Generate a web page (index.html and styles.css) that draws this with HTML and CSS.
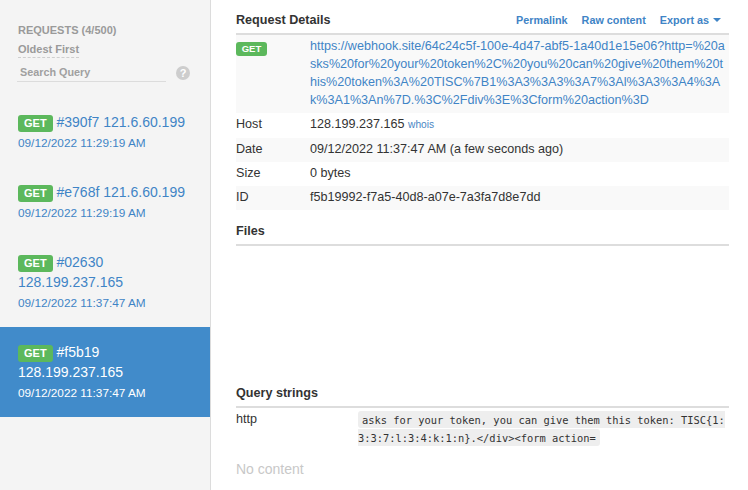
FILE: index.html
```html
<!DOCTYPE html>
<html lang="en">
<head>
<meta charset="utf-8">
<title>Webhook.site</title>
<link rel="stylesheet" href="styles.css">
</head>
<body>
<div class="app">
  <aside class="sidebar">
    <div class="side-head">
      <div class="req-count">Requests (4/500)</div>
      <div class="sort"><span class="sort-link">Oldest First</span></div>
      <div class="search">
        <input class="search-input" type="text" placeholder="Search Query">
        <span class="help">?</span>
      </div>
    </div>
    <ul class="req-list">
      <li class="req">
        <div class="req-title"><span class="badge">GET</span> #390f7 121.6.60.199</div>
        <div class="req-date">09/12/2022 11:29:19 AM</div>
      </li>
      <li class="req">
        <div class="req-title"><span class="badge">GET</span> #e768f 121.6.60.199</div>
        <div class="req-date">09/12/2022 11:29:19 AM</div>
      </li>
      <li class="req">
        <div class="req-title"><span class="badge">GET</span> #02630 128.199.237.165</div>
        <div class="req-date">09/12/2022 11:37:47 AM</div>
      </li>
      <li class="req active">
        <div class="req-title"><span class="badge">GET</span> #f5b19 128.199.237.165</div>
        <div class="req-date">09/12/2022 11:37:47 AM</div>
      </li>
    </ul>
  </aside>
  <main class="main">
    <div class="section-head">
      <h2 class="section-title">Request Details</h2>
      <nav class="actions">
        <a class="action" href="#">Permalink</a>
        <a class="action" href="#">Raw content</a>
        <a class="action" href="#">Export as<span class="caret"></span></a>
      </nav>
    </div>
    <table class="details">
      <colgroup><col class="col-label"><col></colgroup>
      <tr class="odd">
        <td><span class="badge badge-sm">GET</span></td>
        <td class="url"><a class="link" href="#">https://webhook.site/64c24c5f-100e-4d47-abf5-1a40d1e15e06?http=%20asks%20for%20your%20token%2C%20you%20can%20give%20them%20this%20token%3A%20TISC%7B1%3A3%3A3%3A7%3Al%3A3%3A4%3Ak%3A1%3An%7D.%3C%2Fdiv%3E%3Cform%20action%3D</a></td>
      </tr>
      <tr>
        <td>Host</td>
        <td>128.199.237.165 <a class="whois" href="#">whois</a></td>
      </tr>
      <tr class="odd">
        <td>Date</td>
        <td>09/12/2022 11:37:47 AM (a few seconds ago)</td>
      </tr>
      <tr>
        <td>Size</td>
        <td>0 bytes</td>
      </tr>
      <tr class="odd">
        <td>ID</td>
        <td>f5b19992-f7a5-40d8-a07e-7a3fa7d8e7dd</td>
      </tr>
    </table>
    <div class="section-head section-gap">
      <h2 class="section-title">Files</h2>
    </div>
    <div class="files-body"></div>
    <div class="section-head section-gap">
      <h2 class="section-title">Query strings</h2>
    </div>
    <table class="query">
      <colgroup><col class="col-qlabel"><col></colgroup>
      <tr>
        <td>http</td>
        <td><code class="code"> asks for your token, you can give them this token: TISC{1:3:3:7:l:3:4:k:1:n}.&lt;/div&gt;&lt;form action=</code></td>
      </tr>
    </table>
    <p class="empty">No content</p>
  </main>
</div>
</body>
</html>
```

FILE: styles.css
```css
html, body {
  margin: 0;
  padding: 0;
  height: 100%;
}

body {
  font-family: "Liberation Sans", Arial, sans-serif;
  color: #333;
  background: #fff;
  overflow: hidden;
}

.app {
  display: flex;
  height: 490px;
}

/* Sidebar */
.sidebar {
  width: 210px;
  flex: 0 0 210px;
  background: #f4f4f4;
  border-right: 1px solid #dcdcdc;
}

.side-head {
  padding: 23px 18px 0 18px;
}

.req-count {
  font-size: 11px;
  line-height: 15px;
  font-weight: bold;
  text-transform: uppercase;
  color: #9a9a9a;
}

.sort {
  display: flex;
  margin-top: 4px;
}

.sort-link {
  display: inline-block;
  font-size: 11px;
  line-height: 15px;
  font-weight: bold;
  color: #9a9a9a;
  border-bottom: 1px dashed #cfcfcf;
}

.search {
  display: flex;
  align-items: center;
  gap: 10px;
  margin-top: 6px;
}

.search-input {
  box-sizing: border-box;
  width: 149px;
  height: 18px;
  margin: 0 0 0 -1px;
  padding: 0 3px 2px 3px;
  border: 0;
  border-bottom: 1px solid #dcdcdc;
  background: transparent;
  font-family: "Liberation Sans", Arial, sans-serif;
  font-size: 10.8px;
  font-weight: bold;
  line-height: 15px;
  color: #555;
  outline: none;
}

.search-input::placeholder {
  color: #a0a0a0;
  opacity: 1;
}

.help {
  display: inline-flex;
  align-items: center;
  justify-content: center;
  width: 14px;
  height: 14px;
  border-radius: 50%;
  background: #cdcdcd;
  color: #fff;
  font-size: 11px;
  font-weight: bold;
  line-height: 14px;
}

.req-list {
  list-style: none;
  margin: 15px 0 0 0;
  padding: 0;
}

.req {
  padding: 15px 18px 14px 18px;
  color: #3f84c6;
}

.req.active {
  background: #418bca;
  color: #fff;
}

.req-title {
  font-size: 14px;
  line-height: 20px;
}

.req-date {
  font-size: 11.8px;
  line-height: 20px;
  margin-top: 1px;
}

.badge {
  display: inline-block;
  background: #5cb85c;
  color: #fff;
  font-size: 11px;
  font-weight: bold;
  line-height: 12px;
  padding: 2px 6px 3px 6px;
  border-radius: 3px;
}

.badge-sm {
  font-size: 9.5px;
  line-height: 10px;
  padding: 2px 5.7px 2px 5.7px;
  vertical-align: -1.5px;
}

/* Main */
.main {
  flex: 1;
  min-width: 0;
  padding: 0 19px 0 25px;
  overflow: hidden;
}

.section-head {
  display: flex;
  justify-content: space-between;
  align-items: baseline;
  padding: 11px 0 4px 0;
  border-bottom: 2px solid #dddddd;
}

.section-gap {
  margin-top: 12px;
  padding-top: 0;
}

.section-title {
  margin: 0;
  font-size: 12.6px;
  line-height: 18px;
  font-weight: bold;
  color: #333;
}

.actions {
  display: flex;
  gap: 14px;
  margin-right: 8px;
}

.action {
  font-size: 10.8px;
  font-weight: bold;
  line-height: 18px;
  color: #3f84c6;
  text-decoration: none;
  display: inline-flex;
  align-items: center;
}

.caret {
  display: inline-block;
  width: 0;
  height: 0;
  margin-left: 4px;
  border-top: 4px solid #3f84c6;
  border-left: 4px solid transparent;
  border-right: 4px solid transparent;
}

.details,
.query {
  width: 100%;
  border-collapse: collapse;
  table-layout: fixed;
  font-size: 12.6px;
  line-height: 18px;
}

.col-label {
  width: 74px;
}

.col-qlabel {
  width: 122px;
}

.details td,
.query td {
  padding: 2px 0 4px 0;
  vertical-align: top;
}

.details tr.odd {
  background: #f9f9f9;
}

.url {
  word-break: break-all;
}

.link {
  color: #3f84c6;
  text-decoration: none;
}

.whois {
  font-size: 10.2px;
  color: #4a86c4;
  text-decoration: none;
}

.files-body {
  height: 126px;
}

.code {
  font-family: "DejaVu Sans Mono", "Liberation Mono", monospace;
  font-size: 10.4px;
  color: #333;
  background: #eeeeee;
  padding: 2.5px 4px;
  border-radius: 3px;
  word-break: break-all;
}

.empty {
  margin: 9px 0 0 0;
  font-size: 14px;
  line-height: 20px;
  color: #c8c8c8;
}
```
